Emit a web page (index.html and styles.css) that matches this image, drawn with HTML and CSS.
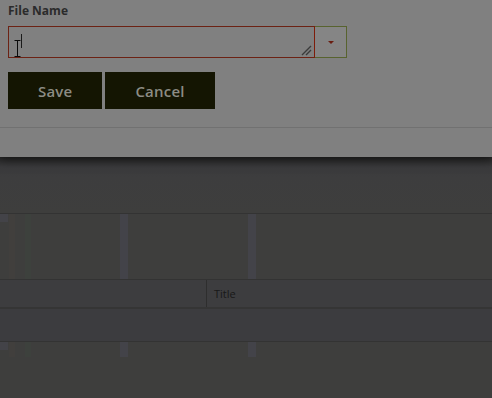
FILE: index.html
```html
<!DOCTYPE html>
<html>
<head>
<meta charset="utf-8">
<link rel="stylesheet" href="styles.css">
</head>
<body>
<div class="panel">
  <div class="form">
    <label class="label">File Name</label>
    <div class="field-row">
      <div class="textarea">
        <span class="caret"></span>
        <svg class="ibeam" width="8" height="17" viewBox="0 0 8 17"><path d="M0.5 0.5h6M3.5 0.5v16M0.5 16.5h6" stroke="#0a0a0a" stroke-width="1" fill="none"/></svg>
        <svg class="grip" width="11" height="11" viewBox="0 0 11 11"><path d="M1 10L10 1M5 10L10 5" stroke="#3a3a3a" stroke-width="1.4" fill="none"/></svg>
      </div>
      <div class="drop"><span class="tri"></span></div>
    </div>
    <div class="buttons">
      <button class="btn">Save</button>
      <button class="btn">Cancel</button>
    </div>
  </div>
  <div class="rule"></div>
</div>
<div class="page">
  <div class="band band-top"></div>
  <div class="stripes tall">
    <span class="s s0"></span><span class="s s1"></span><span class="s s2"></span><span class="s s3"></span><span class="s s4"></span>
  </div>
  <div class="header">
    <div class="hcell first"></div>
    <div class="hcell title">Title</div>
  </div>
  <div class="row"></div>
  <div class="stripes short">
    <span class="s s0"></span><span class="s s1"></span><span class="s s2"></span><span class="s s3"></span><span class="s s4"></span>
  </div>
</div>
</body>
</html>
```

FILE: styles.css
```css
html, body {
  margin: 0;
  padding: 0;
}
body {
  width: 492px;
  height: 398px;
  overflow: hidden;
  background: #3e3e3d;
  font-family: "Open Sans", "Liberation Sans", sans-serif;
}
.panel {
  height: 157px;
  background: #808080;
  box-shadow: 0 2px 10px rgba(0,0,0,0.55);
  position: relative;
  z-index: 2;
}
.form {
  padding: 2px 8px 0 8px;
  height: 126px;
  box-sizing: border-box;
}
.label {
  display: block;
  font-weight: bold;
  font-size: 12px;
  line-height: 18px;
  color: #2b2b2b;
  height: 24px;
}
.field-row {
  display: flex;
  height: 32px;
}
.textarea {
  width: 307px;
  height: 32px;
  box-sizing: border-box;
  border: 1px solid #6c2214;
  border-right-color: #7e1c0a;
  position: relative;
}
.caret {
  position: absolute;
  left: 12px;
  top: 7px;
  width: 1px;
  height: 14px;
  background: #1a1a1a;
}
.ibeam {
  position: absolute;
  left: 5px;
  top: 13px;
}
.grip {
  position: absolute;
  right: 2px;
  bottom: 1px;
}
.drop {
  width: 32px;
  height: 32px;
  box-sizing: border-box;
  border: 1px solid #58632f;
  border-left: none;
  background: #858585;
  display: flex;
  align-items: center;
  justify-content: center;
}
.tri {
  width: 0;
  height: 0;
  border-left: 3px solid transparent;
  border-right: 3px solid transparent;
  border-top: 3px solid #6a1c10;
}
.buttons {
  display: flex;
  gap: 3px;
  margin-top: 14px;
}
.btn {
  height: 37px;
  padding: 0 30px;
  border: none;
  background: #141502;
  color: #8c8c84;
  font-family: "Open Sans", "Liberation Sans", sans-serif;
  font-weight: 600;
  font-size: 15px;
  letter-spacing: 0.2px;
}
.rule {
  height: 1px;
  background: #717171;
  margin-top: 1px;
}
.page {
  display: flex;
  flex-direction: column;
}
.band-top {
  height: 56px;
  border-bottom: 1px solid #333333;
  background: linear-gradient(#282828 0px, #3a3a3c 10px, #3d3d3e 20px, #3e3e3d 56px);
}
.stripes {
  position: relative;
}
.stripes.tall { height: 65px; border-bottom: 1px solid #333333; }
.stripes.short { height: 15px; }
.s {
  position: absolute;
  top: 0;
  bottom: 0;
}
.s0 { left: 0; width: 8px; height: 8px; background: #434348; }
.s1 { left: 9px; width: 6px; background: #413f3d; }
.s2 { left: 25px; width: 6px; background: #3d413d; }
.s3 { left: 120px; width: 8px; background: #434349; }
.s4 { left: 248px; width: 8px; background: #434349; }
.header {
  display: flex;
  height: 27px;
  background: #3d3d3f;
  border-bottom: 2px solid #353535;
}
.hcell.first {
  width: 206px;
  border-right: 1px solid #2e2e2e;
}
.hcell.title {
  padding-left: 7px;
  font-size: 11px;
  line-height: 27px;
  color: #181818;
}
.row {
  height: 32px;
  background: #3c3c3f;
  border-bottom: 1px solid #333333;
}
```
